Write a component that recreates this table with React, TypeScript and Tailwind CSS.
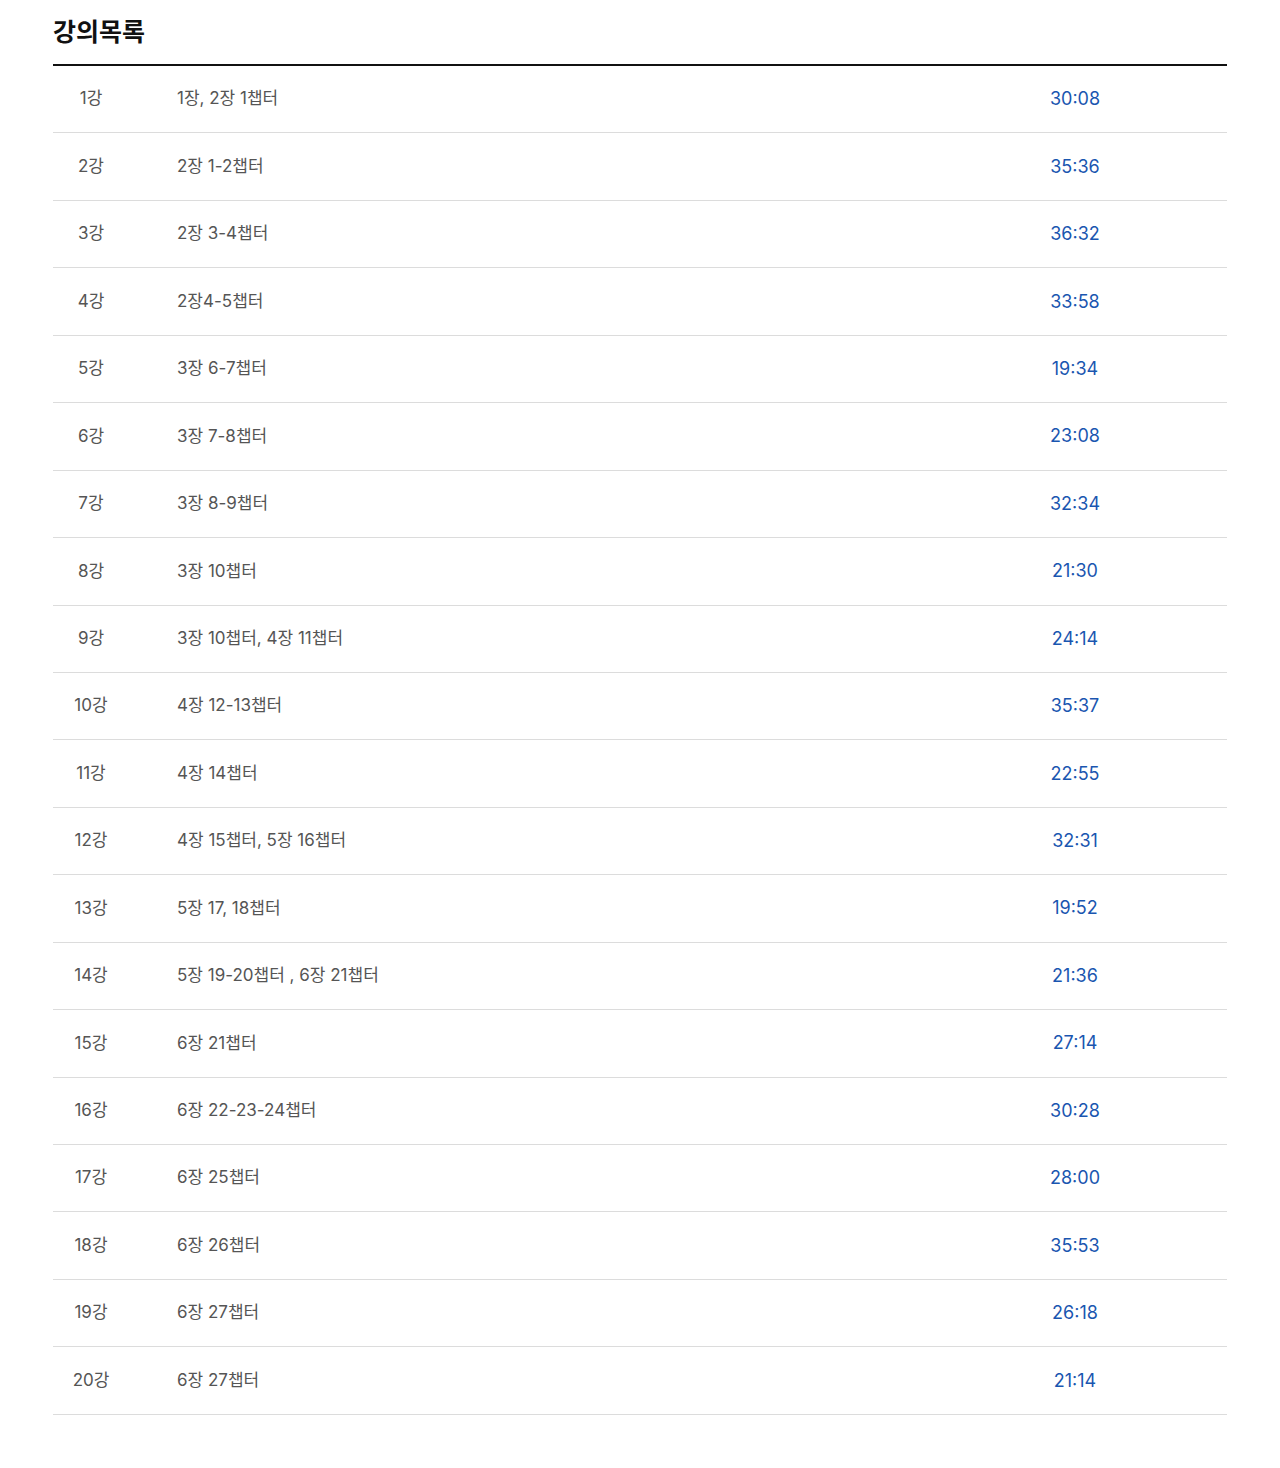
const lectures = [
  { no: "1강", title: "1장, 2장 1챕터", time: "30:08" },
  { no: "2강", title: "2장 1-2챕터", time: "35:36" },
  { no: "3강", title: "2장 3-4챕터", time: "36:32" },
  { no: "4강", title: "2장4-5챕터", time: "33:58" },
  { no: "5강", title: "3장 6-7챕터", time: "19:34" },
  { no: "6강", title: "3장 7-8챕터", time: "23:08" },
  { no: "7강", title: "3장 8-9챕터", time: "32:34" },
  { no: "8강", title: "3장 10챕터", time: "21:30" },
  { no: "9강", title: "3장 10챕터, 4장 11챕터", time: "24:14" },
  { no: "10강", title: "4장 12-13챕터", time: "35:37" },
  { no: "11강", title: "4장 14챕터", time: "22:55" },
  { no: "12강", title: "4장 15챕터, 5장 16챕터", time: "32:31" },
  { no: "13강", title: "5장 17, 18챕터", time: "19:52" },
  { no: "14강", title: "5장 19-20챕터 , 6장 21챕터", time: "21:36" },
  { no: "15강", title: "6장 21챕터", time: "27:14" },
  { no: "16강", title: "6장 22-23-24챕터", time: "30:28" },
  { no: "17강", title: "6장 25챕터", time: "28:00" },
  { no: "18강", title: "6장 26챕터", time: "35:53" },
  { no: "19강", title: "6장 27챕터", time: "26:18" },
  { no: "20강", title: "6장 27챕터", time: "21:14" },
];

export default function App() {
  return (
    <div className="min-h-[1468px] bg-white font-['Inter','Noto_Sans_CJK_KR',sans-serif]">
      <div className="mx-[53px] pt-[16px]">
        <h2 className="text-[25px] font-bold leading-[32px] text-[#111]">
          강의목록
        </h2>

        {/* Lecture list */}
        <ul className="mt-[16px] border-t-2 border-[#111]">
          {lectures.map((item) => (
            <li
              key={item.no}
              className="flex h-[67.45px] items-center border-b border-[#dcdcdc] text-[17px] text-[#555]"
            >
              <span className="w-[76px] text-center">{item.no}</span>
              <span className="ml-[48px] flex-1">{item.title}</span>
              <span className="w-[304px] pb-[1px] text-center text-[18px] text-[#1a56b0]">{item.time}</span>
            </li>
          ))}
        </ul>
      </div>
    </div>
  );
}
